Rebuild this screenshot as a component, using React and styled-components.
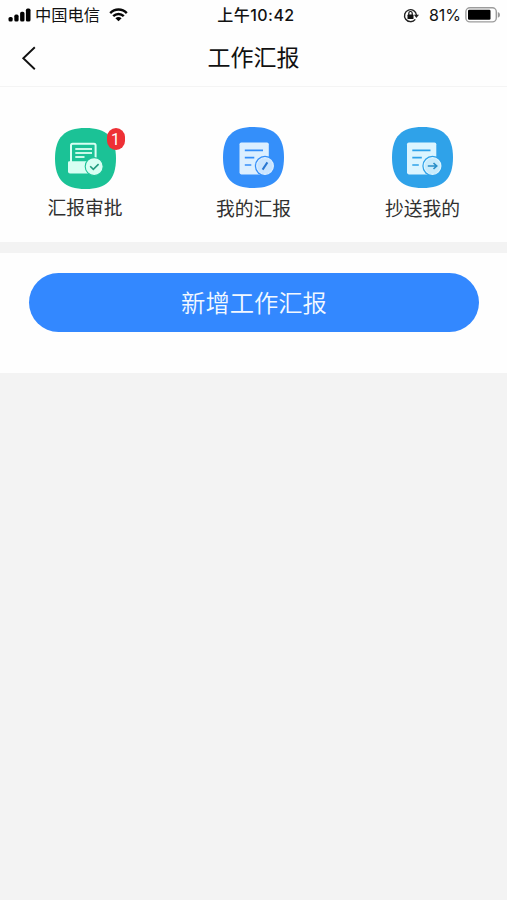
import React from "react";
import styled, { createGlobalStyle } from "styled-components";

const GlobalStyle = createGlobalStyle`
  * { box-sizing: border-box; }
  body {
    margin: 0;
    background: #f3f3f3;
    font-family: "Liberation Sans", "Noto Sans CJK SC", sans-serif;
    color: #111;
  }
  svg { display: block; flex: none; }
`;

const Screen = styled.main`
  min-height: 900px;
  background: #f3f3f3;
`;

const StatusBar = styled.div`
  display: grid;
  grid-template-columns: 1fr auto 1fr;
  align-items: center;
  height: 30px;
  padding: 0 6px 0 8px;
  background: #fefefe;
  font-family: Inter, "Noto Sans CJK SC", sans-serif;
  font-size: 16px;
  line-height: 30px;
`;

const StatusGroup = styled.div`
  display: flex;
  align-items: center;
  justify-content: ${(p) => (p.$end ? "flex-end" : "flex-start")};
`;

const Carrier = styled.span`
  margin: 0 9px 0 4px;
  font-size: 16.3px;
`;

const Clock = styled.span`
  font-size: 16px;
  font-weight: 500;
  letter-spacing: 0.45px;
  padding-left: 3px;
`;

const Percent = styled.span`
  margin: 0 4px 0 9px;
  font-size: 16px;
`;

const NavBar = styled.header`
  display: grid;
  grid-template-columns: 60px 1fr 60px;
  align-items: center;
  height: 57px;
  background: #fefefe;
  border-bottom: 1px solid #f4f4f4;
`;

const BackButton = styled.button`
  display: flex;
  padding: 0 0 0 21px;
  border: 0;
  background: none;
`;

const Title = styled.h1`
  margin: 0;
  font-size: 23px;
  font-weight: 400;
  line-height: 56px;
  text-align: center;
`;

const Shortcuts = styled.nav`
  display: grid;
  grid-template-columns: repeat(3, 1fr);
  height: 155px;
  padding-top: 40px;
  background: #fefefe;
`;

const Shortcut = styled.a`
  display: flex;
  flex-direction: column;
  align-items: center;
  padding-top: ${(p) => p.$top || 0}px;
  padding-left: ${(p) => p.$left || 0}px;
`;

const IconWrap = styled.span`
  position: relative;
  display: block;
`;

const CountBadge = styled.span`
  position: absolute;
  top: 0;
  right: -9px;
  width: 18px;
  height: 22px;
  border-radius: 9px;
  background: #ee3035;
  color: #fff;
  font-family: Roboto, sans-serif;
  font-size: 16px;
  line-height: 23px;
  text-align: center;
`;

const Label = styled.span`
  margin-top: ${(p) => p.$gap}px;
  font-size: 18.8px;
  line-height: 28px;
  color: #303030;
  white-space: nowrap;
`;

const ActionPanel = styled.section`
  height: 120px;
  margin-top: 11px;
  padding: 20px 28px 0 29px;
  background: #fefefe;
`;

const PrimaryButton = styled.button`
  display: block;
  width: 100%;
  height: 59px;
  padding: 3px 0 0;
  border: 0;
  border-radius: 30px;
  background: #3388ff;
  color: #f2f8ff;
  font-family: inherit;
  font-size: 24.3px;
  font-weight: 350;
  line-height: 56px;
`;

const TILE = "M30.5 0C51.5 0 61 9.5 61 30.5S51.5 61 30.5 61 0 51.5 0 30.5 9.5 0 30.5 0Z";

function SignalIcon() {
  return (
    <svg width="23" height="15" viewBox="0 0 23 15">
      <rect x="0.5" y="9" width="4.2" height="4.6" rx="1.6" />
      <rect x="6.3" y="6.6" width="4.3" height="7" rx="1.6" />
      <rect x="12.1" y="3.8" width="4.4" height="9.8" rx="1.6" />
      <rect x="17.9" y="0.6" width="4.6" height="13" rx="1.6" />
    </svg>
  );
}

function WifiIcon() {
  return (
    <svg width="19" height="14" viewBox="0 0 19 14">
      <path d="M1.2 5.1C5.8.3 13.2.3 17.8 5.1M4.2 8.2C7.2 5.2 11.8 5.2 14.8 8.2" fill="none" stroke="#080808" strokeWidth="2.4" />
      <path d="M9.5 13.2 6.4 10.2Q9.5 7.8 12.6 10.2Z" />
    </svg>
  );
}

function RotationLockIcon() {
  return (
    <svg width="17" height="15" viewBox="0 0 17 15">
      <path d="M12.3 11.3A6 6 0 1 1 13.5 7.2" fill="none" stroke="#222" strokeWidth="1.4" />
      <path d="M10.9 6.7H16L13.4 10Z" fill="#222" />
      <rect x="4.5" y="6.6" width="6" height="4.4" rx=".6" fill="#111" />
      <path d="M5.8 7V5.2a1.7 1.7 0 0 1 3.4 0V7" fill="none" stroke="#111" strokeWidth="1.2" />
    </svg>
  );
}

function BatteryIcon() {
  return (
    <svg width="36" height="17" viewBox="0 0 36 17">
      <rect x=".9" y=".7" width="30.4" height="14.2" rx="4" fill="none" stroke="#9c9c9c" strokeWidth="1.4" />
      <rect x="3" y="2.8" width="22.5" height="10" rx="1.2" />
      <path d="M32.8 5.1Q35 5.8 35 7.9T32.8 10.7Z" fill="#999" />
    </svg>
  );
}

function BackIcon() {
  return (
    <svg width="16" height="24" viewBox="0 0 16 24">
      <path d="M13.8 1.2 2.3 12.2 13.8 23.2" fill="none" stroke="#111" strokeWidth="1.9" />
    </svg>
  );
}

function ApprovalIcon() {
  return (
    <svg width="61" height="61" viewBox="0 0 61 61">
      <path d={TILE} fill="#1bc296" />
      <path d="M16 34V17.4Q16 15.8 17.6 15.8H39Q40.6 15.8 40.6 17.4V34" fill="none" stroke="#d8fff3" strokeWidth="2" />
      <path d="M20.3 21H37M20.3 25H37M20.3 29H29.5" stroke="#c9f9e9" strokeWidth="1.8" />
      <path d="M14.2 33.2H35V45.5H15Q13 45.5 13 43.5V34.4Q13 33.2 14.2 33.2Z" fill="#d8fff3" />
      <circle cx="39.2" cy="38.6" r="9" fill="#d8fff3" stroke="#1bc296" strokeWidth="1.1" />
      <path d="M35.2 38.3 38.3 41.3 43.6 36.1" fill="none" stroke="#249c80" strokeWidth="1.6" />
    </svg>
  );
}

function DocumentIcon({ tile, paper, disc, x, children }) {
  return (
    <svg width="61" height="61" viewBox="0 0 61 61">
      <path d={TILE} fill={tile} />
      <g transform={`translate(${x} 0)`}>
        <rect x="16.5" y="15.4" width="29.3" height="32" rx="1.8" fill={paper} />
        <path d="M21.8 23.4H40M21.8 30.7H31.3M21.8 38H28.3" stroke={tile} strokeWidth="1.7" />
        <circle cx="42" cy="39" r="10.2" fill={tile} />
        <circle cx="42" cy="39" r="8.3" fill={disc} stroke={paper} strokeWidth="1.3" />
        {children}
      </g>
    </svg>
  );
}

export default function App() {
  return (
    <Screen>
      <GlobalStyle />
      <StatusBar>
        <StatusGroup>
          <SignalIcon />
          <Carrier>中国电信</Carrier>
          <WifiIcon />
        </StatusGroup>
        <Clock>上午10:42</Clock>
        <StatusGroup $end>
          <RotationLockIcon />
          <Percent>81%</Percent>
          <BatteryIcon />
        </StatusGroup>
      </StatusBar>
      <NavBar>
        <BackButton aria-label="返回">
          <BackIcon />
        </BackButton>
        <Title>工作汇报</Title>
      </NavBar>
      <Shortcuts>
        <Shortcut $top={1} $left={1}>
          <IconWrap>
            <ApprovalIcon />
            <CountBadge>1</CountBadge>
          </IconWrap>
          <Label $gap={6}>汇报审批</Label>
        </Shortcut>
        <Shortcut>
          <IconWrap>
            <DocumentIcon tile="#348ffa" paper="#dcefff" disc="#c9e4ff" x={0}>
              <path d="M39.6 42.6 44.4 35.4" stroke="#2876d2" strokeWidth="2" />
            </DocumentIcon>
          </IconWrap>
          <Label $gap={8}>我的汇报</Label>
        </Shortcut>
        <Shortcut>
          <IconWrap>
            <DocumentIcon tile="#2fa2e9" paper="#dcf5ff" disc="#c8ebfb" x={-1.5}>
              <path d="M37.3 39H46M43 36 46.2 39 43 42" fill="none" stroke="#2a8fc8" strokeWidth="1.7" />
            </DocumentIcon>
          </IconWrap>
          <Label $gap={8}>抄送我的</Label>
        </Shortcut>
      </Shortcuts>
      <ActionPanel>
        <PrimaryButton>新增工作汇报</PrimaryButton>
      </ActionPanel>
    </Screen>
  );
}
